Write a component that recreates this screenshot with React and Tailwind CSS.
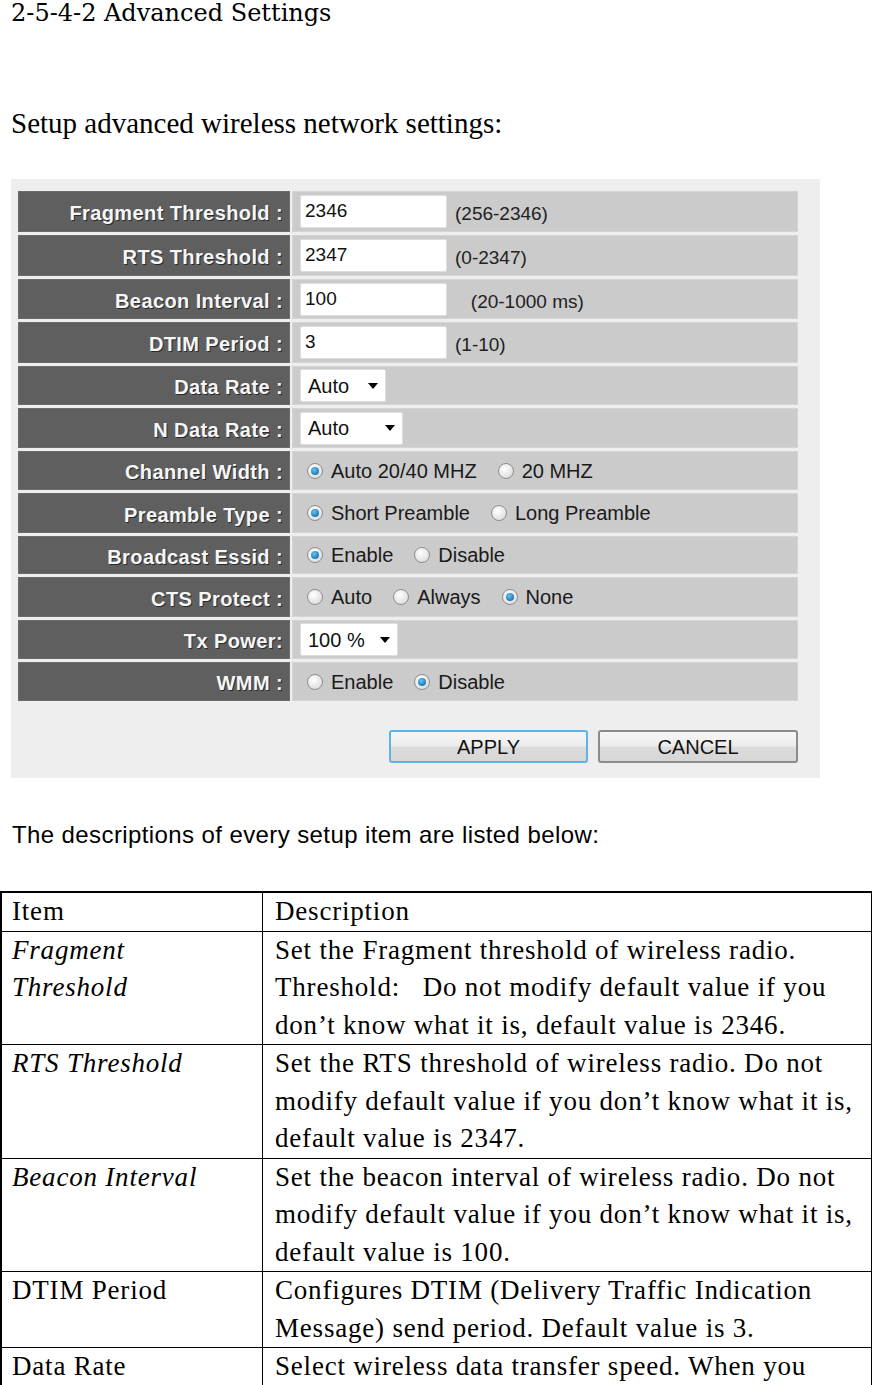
import React from "react";

const rows = [
  { label: "Fragment Threshold :", h: "h-[41px]", type: "input", value: "2346", hint: "(256-2346)" },
  { label: "RTS Threshold :", h: "h-[41px]", type: "input", value: "2347", hint: "(0-2347)" },
  { label: "Beacon Interval :", h: "h-[40px]", type: "input", value: "100", hint: "\u00a0\u00a0\u00a0(20-1000 ms)" },
  { label: "DTIM Period :", h: "h-[41px]", type: "input", value: "3", hint: "(1-10)" },
  { label: "Data Rate :", h: "h-[39px]", type: "select", value: "Auto", w: "w-[86px]" },
  { label: "N Data Rate :", h: "h-[40px]", type: "select", value: "Auto", w: "w-[103px]" },
  { label: "Channel Width :", h: "h-[39px]", type: "radio", options: [["Auto 20/40 MHZ", true], ["20 MHZ", false]] },
  { label: "Preamble Type :", h: "h-[40px]", type: "radio", options: [["Short Preamble", true], ["Long Preamble", false]] },
  { label: "Broadcast Essid :", h: "h-[38px]", type: "radio", options: [["Enable", true], ["Disable", false]] },
  { label: "CTS Protect :", h: "h-[40px]", type: "radio", options: [["Auto", false], ["Always", false], ["None", true]] },
  { label: "Tx Power:", h: "h-[39px]", type: "select", value: "100 %", w: "w-[98px]" },
  { label: "WMM :", h: "h-[39px]", type: "radio", options: [["Enable", false], ["Disable", true]] },
];

const items = [
  { name: ["Fragment", "Threshold"], italic: true, lines: ["Set the Fragment threshold of wireless radio.", "Threshold:\u00a0\u00a0\u00a0Do not modify default value if you", "don\u2019t know what it is, default value is 2346."] },
  { name: ["RTS Threshold"], italic: true, lines: ["Set the RTS threshold of wireless radio. Do not", "modify default value if you don\u2019t know what it is,", "default value is 2347."] },
  { name: ["Beacon Interval"], italic: true, lines: ["Set the beacon interval of wireless radio. Do not", "modify default value if you don\u2019t know what it is,", "default value is 100."] },
  { name: ["DTIM Period"], italic: false, lines: ["Configures DTIM (Delivery Traffic Indication", "Message) send period. Default value is 3."] },
  { name: ["Data Rate"], italic: false, lines: ["Select wireless data transfer speed. When you"] },
];

function Radio({ checked }) {
  return (
    <span className="inline-flex items-center justify-center w-[16px] h-[16px] rounded-full border border-[#8e8e8e] bg-[radial-gradient(circle_at_40%_35%,#ffffff,#d4d4d4)]">
      {checked && (
        <span className="w-[8px] h-[8px] rounded-full bg-[radial-gradient(circle_at_40%_35%,#62c4f2,#0a5a9c)]" />
      )}
    </span>
  );
}

function Value({ row }) {
  if (row.type === "input") {
    return (
      <>
        <div className="ml-[7px] w-[147px] h-[33px] bg-white border border-[#dedede] rounded-[2px] flex items-center pl-[4px] text-[19px] text-[#111]">
          {row.value}
        </div>
        <span className="ml-[8px] pt-[6px] text-[19px] text-[#222] whitespace-pre">{row.hint}</span>
      </>
    );
  }
  if (row.type === "select") {
    return (
      <div className={`ml-[7px] ${row.w} h-[33px] bg-white border border-[#dedede] rounded-[2px] flex items-center justify-between pl-[7px] pr-[7px] text-[20px] text-[#111]`}>
        <span>{row.value}</span>
        <span className="w-0 h-0 border-l-[5px] border-r-[5px] border-t-[6px] border-l-transparent border-r-transparent border-t-black" />
      </div>
    );
  }
  return (
    <div className="ml-[14px] flex items-center text-[20px] text-[#1a1a1a]">
      {row.options.map(([text, checked], i) => (
        <span key={i} className="flex items-center mr-[21px]">
          <Radio checked={checked} />
          <span className="ml-[8px]">{text}</span>
        </span>
      ))}
    </div>
  );
}

export default function App() {
  return (
    <div className="w-[872px] h-[1385px] overflow-hidden bg-white text-black">
      <h1 className="font-['DejaVu_Serif',serif] text-[24px] leading-[28px] font-normal -mt-[1px] pl-[11px]">
        2-5-4-2 Advanced Settings
      </h1>

      <p className="font-['Liberation_Serif',serif] text-[29px] leading-[34px] mt-[79px] pl-[11px]">
        Setup advanced wireless network settings:
      </p>

      <div className="mt-[39px] ml-[11px] w-[809px] h-[599px] bg-[#eeeeee] pt-[12px] pl-[7px] pr-[22px] font-['Liberation_Sans',Arial,sans-serif]">
        <div className="flex flex-col gap-[3px]">
          {rows.map((row) => (
            <div key={row.label} className={`flex gap-[2px] ${row.h}`}>
              <div className="w-[272px] bg-[#5f5f5f] border border-[#6b6b6b] flex items-center justify-end pr-[6px] pt-[3px] text-[20px] font-bold tracking-[0.4px] text-[#f6f6f6] [text-shadow:1px_1px_0_#2a2a2a]">
                {row.label}
              </div>
              <div className="flex-1 bg-[#cbcbcb] border border-[#d5d5d5] flex items-center">
                <Value row={row} />
              </div>
            </div>
          ))}
        </div>

        <div className="flex justify-end gap-[10px] mt-[29px]">
          <button className="w-[199px] h-[33px] rounded-[3px] border-2 border-[#5eb4e6] bg-[linear-gradient(#f7f7f7_0%,#ececec_48%,#dcdcdc_52%,#d6d6d6_100%)] text-[20px] text-[#111] flex items-center justify-center">
            APPLY
          </button>
          <button className="w-[200px] h-[33px] rounded-[3px] border-2 border-[#8c8c8c] bg-[linear-gradient(#f7f7f7_0%,#ececec_48%,#dcdcdc_52%,#d6d6d6_100%)] text-[20px] text-[#111] flex items-center justify-center">
            CANCEL
          </button>
        </div>
      </div>

      <p className="mt-[43px] pl-[12px] font-['Liberation_Sans',Arial,sans-serif] text-[24px] leading-[28px] tracking-[0.4px]">
        The descriptions of every setup item are listed below:
      </p>

      <div className="mt-[42px] w-[872px] border-t-2 border-l-2 border-r border-black font-['Liberation_Serif',serif] text-[27px] leading-[37.5px] tracking-[0.8px]">
        <div className="grid grid-cols-[261px_1fr] border-b border-black">
          <div className="pl-[10px] border-r border-black">Item</div>
          <div className="pl-[12px]">Description</div>
        </div>
        {items.map((it, i) => (
          <div key={i} className={`grid grid-cols-[261px_1fr] ${i < items.length - 1 ? "border-b border-black" : "pb-[20px]"}`}>
            <div className={`pl-[10px] border-r border-black ${it.italic ? "italic" : ""}`}>
              {it.name.map((n) => (
                <div key={n} className="whitespace-nowrap">{n}</div>
              ))}
            </div>
            <div className="pl-[12px]">
              {it.lines.map((l) => (
                <div key={l} className="whitespace-nowrap">{l}</div>
              ))}
            </div>
          </div>
        ))}
      </div>
    </div>
  );
}
